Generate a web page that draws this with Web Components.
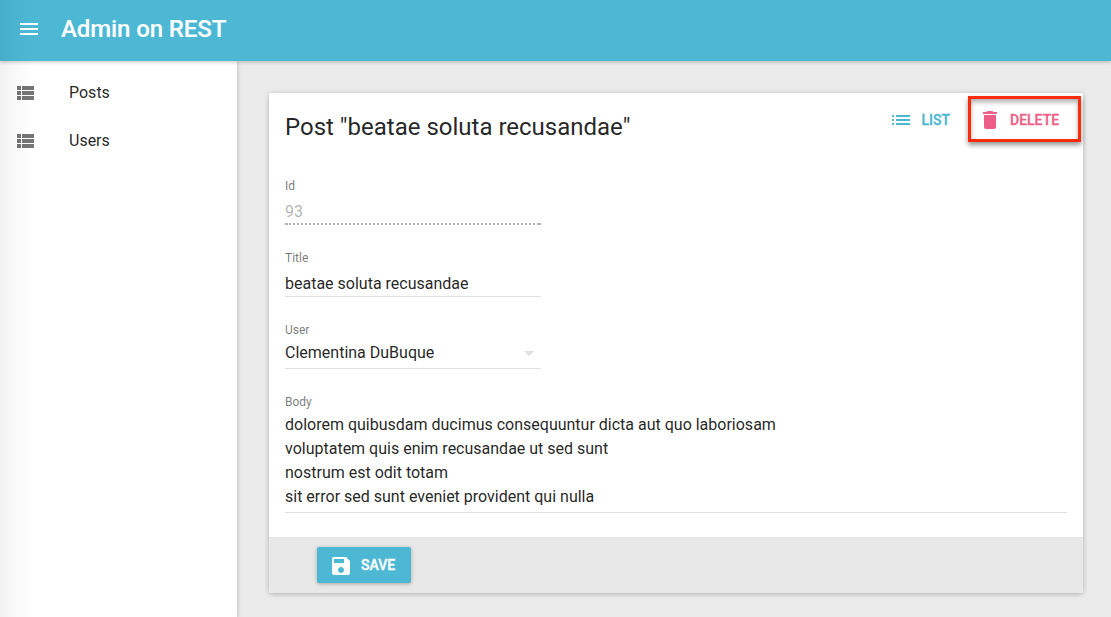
<!DOCTYPE html>
<html lang="en">
<head>
<meta charset="utf-8">
<title>Admin on REST</title>
<style>
html, body { margin: 0; height: 100%; }
body { font-family: Roboto, "Liberation Sans", sans-serif; background: #ebebeb; color: rgba(0,0,0,.87); overflow: hidden; }
</style>
</head>
<body>
<admin-app>
  <app-bar slot="bar">Admin on REST</app-bar>
  <side-menu slot="menu">
    <menu-entry>Posts</menu-entry>
    <menu-entry>Users</menu-entry>
  </side-menu>
  <edit-card>
    <span slot="title">Post "beatae soluta recusandae"</span>
    <flat-button slot="actions" icon="list" style="color:#4cb7d0">List</flat-button>
    <flat-button slot="actions" icon="delete" highlighted style="color:#ee5f87">Delete</flat-button>
    <form-field label="Id" kind="disabled">93</form-field>
    <form-field label="Title">beatae soluta recusandae</form-field>
    <form-field label="User" kind="select">Clementina DuBuque</form-field>
    <form-field label="Body" kind="multiline">dolorem quibusdam ducimus consequuntur dicta aut quo laboriosam
voluptatem quis enim recusandae ut sed sunt
nostrum est odit totam
sit error sed sunt eveniet provident qui nulla</form-field>
    <raised-button slot="footer">Save</raised-button>
  </edit-card>
</admin-app>
<script>
const ICONS = {
  menu: 'M3 18h18v-2H3v2zm0-5h18v-2H3v2zm0-7v2h18V6H3z',
  rows: 'M4 14h4v-4H4v4zm0 5h4v-4H4v4zM4 9h4V5H4v4zm5 5h12v-4H9v4zm0 5h12v-4H9v4zM9 5v4h12V5H9z',
  list: 'M3 13h2v-2H3v2zm0 4h2v-2H3v2zm0-8h2V7H3v2zm4 4h14v-2H7v2zm0 4h14v-2H7v2zM7 7v2h14V7H7z',
  delete: 'M6 19c0 1.1.9 2 2 2h8c1.1 0 2-.9 2-2V7H6v12zM19 4h-3.5l-1-1h-5l-1 1H5v2h14V4z',
  save: 'M17 3H5c-1.11 0-2 .9-2 2v14c0 1.1.89 2 2 2h14c1.1 0 2-.9 2-2V7l-4-4zm-5 16c-1.66 0-3-1.34-3-3s1.34-3 3-3 3 1.34 3 3-1.34 3-3 3zm3-10H5V5h10v4z',
  down: 'M7 10l5 5 5-5z'
};

function define(name, render) {
  customElements.define(name, class extends HTMLElement {
    constructor() { super(); this.attachShadow({ mode: 'open' }); }
    connectedCallback() { this.shadowRoot.innerHTML = render(this); }
  });
}

define('md-icon', el => `
  <style>:host{display:block;width:24px;height:24px;flex:none} svg{display:block;fill:currentColor}</style>
  <svg width="24" height="24" viewBox="0 0 24 24"><path d="${ICONS[el.getAttribute('name')]}"/></svg>`);

define('admin-app', () => `
  <style>
    :host{display:flex;flex-direction:column;height:100vh;position:relative}
    .row{display:flex;flex:1;min-height:0}
    main{flex:1;padding:32px 28px 24px 32px}
    .edge{position:absolute;left:0;top:0;bottom:0;width:36px;pointer-events:none;z-index:3;
      background:linear-gradient(to right,rgba(0,0,0,.055),rgba(0,0,0,.02) 45%,transparent)}
  </style>
  <slot name="bar"></slot>
  <div class="row"><slot name="menu"></slot><main><slot></slot></main></div>
  <div class="edge"></div>`);

define('app-bar', () => `
  <style>
    :host{display:flex;align-items:flex-start;height:61px;box-sizing:border-box;padding:17px 17px 0;gap:20px;background:#4cb8d4;
      color:#fff;position:relative;z-index:2;box-shadow:0 1px 4px rgba(0,0,0,.24)}
    h1{margin:-2px 0 0;font-size:24px;line-height:28px;font-weight:500;letter-spacing:-.1px;-webkit-text-stroke:.12px currentColor}
  </style>
  <md-icon name="menu"></md-icon><h1><slot></slot></h1>`);

define('side-menu', () => `
  <style>:host{display:flex;flex-direction:column;width:237px;padding-top:8px;box-sizing:border-box;background:#fff;
    box-shadow:0 1px 4px rgba(0,0,0,.28)}</style><slot></slot>`);

define('menu-entry', () => `
  <style>
    :host{display:flex;align-items:center;height:48px;padding-left:13px;gap:32px;font-size:16px}
    md-icon{color:#757575}
    span{padding-bottom:2px}
  </style>
  <md-icon name="rows"></md-icon><span><slot></slot></span>`);

define('edit-card', () => `
  <style>
    :host{display:flex;flex-direction:column;height:500px;background:#fff;border-radius:2px;
      box-shadow:0 1px 6px rgba(0,0,0,.12),0 1px 4px rgba(0,0,0,.14)}
    header{display:flex;justify-content:space-between;height:80px;box-sizing:border-box;padding:0 2px 0 16px}
    h2{margin:0;padding-top:16px;font-size:24px;line-height:36px;font-weight:400}
    .actions{display:flex;align-items:flex-start;padding-top:3px}
    .form{display:flex;flex-direction:column;flex:1;padding:0 16px}
    footer{display:flex;align-items:center;height:56px;padding-left:48px;background:#e8e8e8;border-radius:0 0 2px 2px}
  </style>
  <header><h2><slot name="title"></slot></h2><div class="actions"><slot name="actions"></slot></div></header>
  <div class="form"><slot></slot></div>
  <footer><slot name="footer"></slot></footer>`);

define('flat-button', el => `
  <style>
    :host{display:flex;align-items:center;gap:8px;box-sizing:border-box;height:46px;
      padding:2px 18px 0 12px;font-size:14px;font-weight:500;text-transform:uppercase;-webkit-text-stroke:.3px currentColor}
    :host([highlighted]){width:113px;padding:2px 0 0 7px;border:3px solid #fd2b0c;
      box-shadow:0 3px 5px rgba(0,0,0,.42),inset 0 3px 5px rgba(0,0,0,.32)}
  </style>
  <md-icon name="${el.getAttribute('icon')}"></md-icon><span><slot></slot></span>`);

define('form-field', el => `
  <style>
    :host{display:flex;flex-direction:column;width:256px;height:72px;box-sizing:border-box;padding-top:5px;font-size:16px}
    :host([kind=multiline]){width:auto;height:auto}
    label{font-size:12px;line-height:16px;color:rgba(0,0,0,.54)}
    .value{display:flex;align-items:center;height:24px;padding-top:6px;line-height:24px}
    .value span{flex:1}
    hr{margin:0;border:0;height:1px;width:100%;background:#e0e0e0;flex:none}
    :host([kind=disabled]) .value{color:rgba(0,0,0,.32)}
    :host([kind=disabled]) hr{height:2px;margin-top:-1px;
      background:linear-gradient(#b3b3b3,#b3b3b3) right/3px 2px no-repeat,linear-gradient(#b3b3b3,#b3b3b3) left/3px 2px no-repeat,
        repeating-linear-gradient(to right,#b3b3b3 0 2px,transparent 2px 4px)}
    :host([kind=select]) .value{padding:3px 0}
    md-icon{color:#e0e0e0}
    :host([kind=multiline]) .value{height:auto;padding:3px 0;white-space:pre}
  </style>
  <label>${el.getAttribute('label')}</label>
  <div class="value"><span><slot></slot></span>${el.getAttribute('kind') === 'select' ? '<md-icon name="down"></md-icon>' : ''}</div>
  <hr>`);

define('raised-button', () => `
  <style>
    :host{display:flex;align-items:center;gap:8px;height:36px;width:94px;box-sizing:border-box;padding-left:12px;border-radius:2px;
      background:#4cb8d4;color:#fff;font-size:14px;font-weight:500;text-transform:uppercase;-webkit-text-stroke:.35px currentColor;
      box-shadow:0 1px 5px rgba(0,0,0,.16),0 1px 3px rgba(0,0,0,.14)}
    md-icon{padding-top:2px}
  </style>
  <md-icon name="save"></md-icon><span><slot></slot></span>`);
</script>
</body>
</html>
